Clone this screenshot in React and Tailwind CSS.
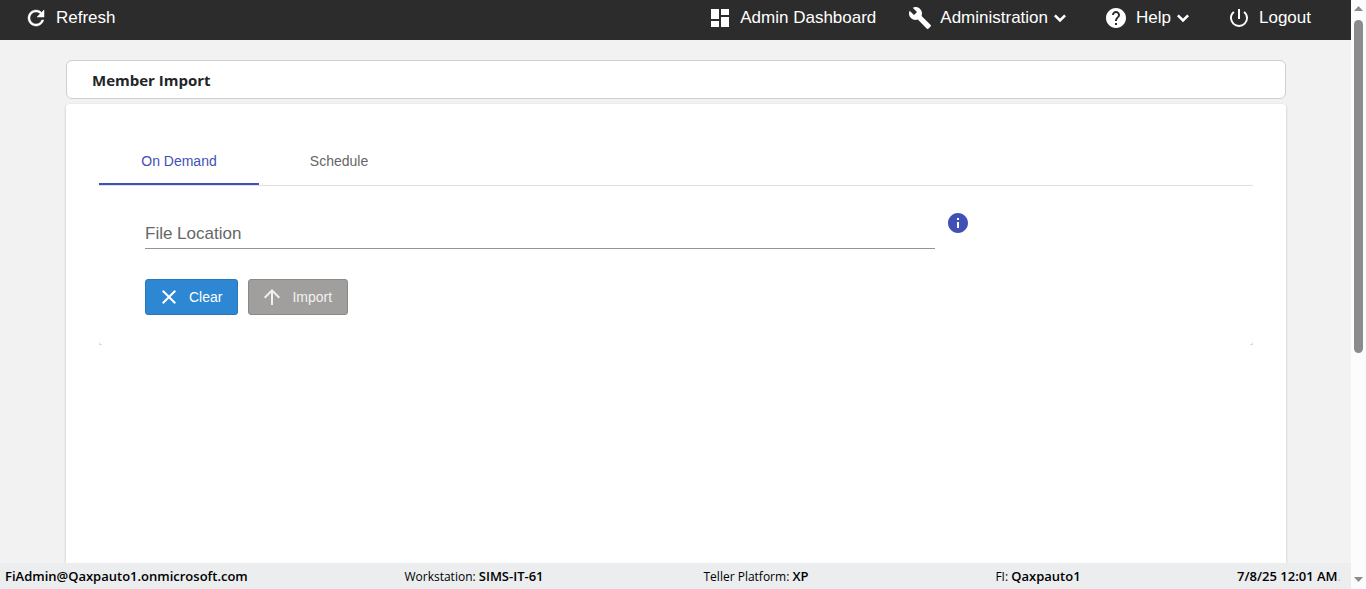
import React, { useState } from "react";
import {
  MdArrowUpward,
  MdBuild,
  MdClose,
  MdDashboard,
  MdHelp,
  MdInfo,
  MdPowerSettingsNew,
} from "react-icons/md";

const TABS = ["On Demand", "Schedule"];

const RefreshIcon = () => (
  <svg className="size-6" viewBox="0 0 24 24" fill="currentColor" stroke="currentColor" strokeWidth="0.5">
    <path d="M17.65 6.35A7.958 7.958 0 0 0 12 4c-4.42 0-7.99 3.58-7.99 8s3.57 8 7.99 8c3.73 0 6.84-2.55 7.73-6h-2.08A5.99 5.99 0 0 1 12 18c-3.31 0-6-2.69-6-6s2.69-6 6-6c1.66 0 3.14.69 4.22 1.78L13 11h7V4l-2.35 2.35z" />
  </svg>
);

const ChevronIcon = () => (
  <svg className="size-6" viewBox="0 0 24 24" fill="none" stroke="currentColor" strokeWidth="2.6">
    <path d="M6.9 9.4 12 14.5l5.1-5.1" />
  </svg>
);

const NavButton = ({ icon, label, hasMenu }) => (
  <button className="flex items-center whitespace-nowrap">
    {icon}
    <span className="ml-2">{label}</span>
    {hasMenu && <ChevronIcon />}
  </button>
);

const TopBar = () => (
  <header className="flex h-10 shrink-0 items-center justify-between bg-[#2c2c2c] pr-10 pb-1 pl-6 font-['Liberation_Sans',sans-serif] text-[17px] text-white">
    <NavButton icon={<RefreshIcon />} label="Refresh" />
    <nav className="flex items-center gap-8">
      <NavButton icon={<MdDashboard className="size-6" />} label="Admin Dashboard" />
      <NavButton icon={<MdBuild className="size-6" />} label="Administration" hasMenu />
      <NavButton icon={<MdHelp className="size-6" />} label="Help" hasMenu />
      <NavButton icon={<MdPowerSettingsNew className="size-6" />} label="Logout" />
    </nav>
  </header>
);

const Tabs = ({ active, setActive }) => (
  <div role="tablist" className="flex border-b border-[#e0e0e0]">
    {TABS.map((tab) => (
      <button
        key={tab}
        role="tab"
        aria-selected={tab === active}
        onClick={() => setActive(tab)}
        className={
          tab === active
            ? "h-12 w-40 border-b-2 border-[#3f51b5] pt-0.5 text-sm text-[#3f51b5]"
            : "h-12 w-40 border-b-2 border-transparent pt-0.5 text-sm text-[#666666]"
        }
      >
        {tab}
      </button>
    ))}
  </div>
);

const ImportForm = () => {
  const [location, setLocation] = useState("");

  return (
    <div className="overflow-hidden">
      <form
        className="rounded-b pt-[25px] pb-[30px] pl-[46px] shadow-[0_1px_2px_rgba(0,0,0,0.35)]"
        onSubmit={(e) => e.preventDefault()}
      >
        <div className="flex items-start pr-[283px]">
          <input
            id="location"
            type="text"
            aria-label="File Location"
            placeholder="File Location"
            value={location}
            onChange={(e) => setLocation(e.target.value)}
            className="h-[38px] min-w-0 flex-1 border-b border-[#949494] pt-2 text-[17px] text-black outline-none placeholder:text-[#666666]"
          />
          <MdInfo className="ml-[11px] size-6 shrink-0 text-[#3f51b5]" />
        </div>
        <div className="mt-[30px] flex gap-2.5 text-sm">
          <button
            type="button"
            onClick={() => setLocation("")}
            className="flex h-9 items-center gap-2 rounded-[3px] border border-[#2778bd] bg-[#2d87d3] pr-[15px] pl-[11px] text-white"
          >
            <MdClose className="size-6" />
            Clear
          </button>
          <button
            type="submit"
            disabled
            className="flex h-9 items-center gap-2 rounded-[3px] border border-[#8b8a89] bg-[#a09f9e] pr-[15px] pl-[11px] text-[#f2f2f2]"
          >
            <MdArrowUpward className="size-6" />
            Import
          </button>
        </div>
      </form>
    </div>
  );
};

const StatusBar = () => (
  <footer className="flex h-[26px] shrink-0 items-center bg-[#ebedee] pt-px pr-2.5 pl-[5px] text-center font-['Open_Sans',sans-serif] text-xs whitespace-nowrap text-black">
    <div className="w-[328px] text-left text-[13px] font-semibold">FiAdmin@Qaxpauto1.onmicrosoft.com</div>
    <div className="flex-1">
      Workstation: <b className="text-[13px] font-semibold">SIMS-IT-61</b>
    </div>
    <div className="flex-1">
      Teller Platform: <b className="text-[13px] font-semibold">XP</b>
    </div>
    <div className="flex-1">
      FI: <b className="text-[13px] font-semibold">Qaxpauto1</b>
    </div>
    <div className="w-[162px] text-right text-[13px] font-semibold">
      7/8/25 12:01 AM<span className="font-normal text-[#c4c6c7]">.</span>
    </div>
  </footer>
);

const ScrollRail = () => (
  <div aria-hidden="true" className="flex w-[15px] shrink-0 flex-col items-center bg-[#fcfcfc]">
    <svg className="mt-1.5 h-[5px] w-[9px]" viewBox="0 0 9 5">
      <path d="M4.5 0 9 5H0z" fill="#8b8b8b" />
    </svg>
    <div className="mt-[9px] w-[9px] flex-[334] rounded-full bg-[#8b8b8b]" />
    <div className="flex-[215]" />
    <svg className="mt-[9px] mb-[7px] h-[5px] w-[9px]" viewBox="0 0 9 5">
      <path d="M4.5 5 9 0H0z" fill="#8b8b8b" />
    </svg>
  </div>
);

const App = () => {
  const [tab, setTab] = useState("On Demand");

  return (
    <div className="flex h-screen bg-[#f2f2f2]">
      <div className="flex min-w-0 flex-1 flex-col">
        <TopBar />
        <main className="flex min-h-0 flex-1 flex-col overflow-hidden pt-5 pr-[65px] pl-[66px]">
          <h1 className="flex h-[39px] shrink-0 items-center rounded-md border border-[#cfcfcf] bg-white px-[25px] pt-0.5 font-['Open_Sans',sans-serif] text-[15px] font-bold text-[#212529]">
            Member Import
          </h1>
          <section className="mt-[5px] flex-1 rounded-t bg-white p-[33px] font-['Liberation_Sans',sans-serif] shadow-[0_1px_3px_rgba(0,0,0,0.2)]">
            <Tabs active={tab} setActive={setTab} />
            <ImportForm />
          </section>
        </main>
        <StatusBar />
      </div>
      <ScrollRail />
    </div>
  );
};

export default App;
